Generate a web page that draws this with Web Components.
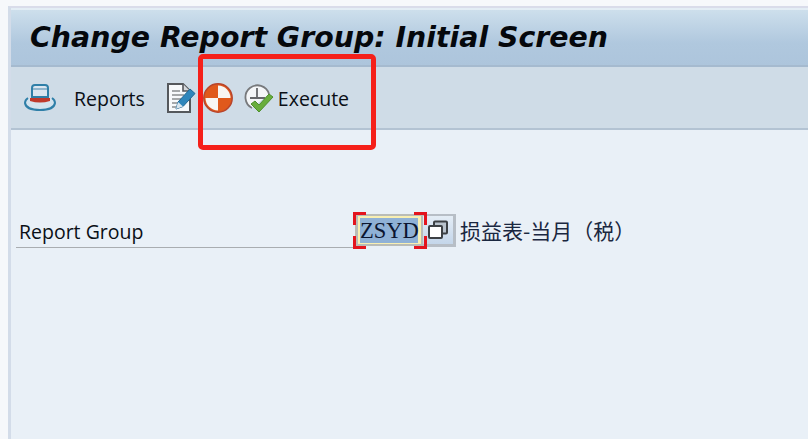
<!DOCTYPE html>
<html lang="en"><head><meta charset="utf-8"><title>Change Report Group</title>
<style>html,body{margin:0;height:100%;overflow:hidden;background:#f5f7fa}</style></head>
<body>
<sap-window>
  <sap-title slot="title">Change Report Group: Initial Screen</sap-title>
  <sap-toolbar slot="toolbar">
    <sap-tool icon="hat" style="--gap:17px">Reports</sap-tool>
    <sap-tool icon="edit" style="--ml:21px"></sap-tool>
    <sap-tool icon="target" style="--ml:7px"></sap-tool>
    <sap-tool icon="run" style="--ml:10px;--gap:4px">Execute</sap-tool>
  </sap-toolbar>
  <sap-field label="Report Group" value="ZSYD" desc="损益表-当月（税）"></sap-field>
</sap-window>
<callout-box></callout-box>
<script>
class SapWindow extends HTMLElement {
  constructor() {
    super();
    this.attachShadow({ mode: 'open' }).innerHTML = `<style>
:host{display:flex;flex-direction:column;height:439px;box-sizing:border-box;padding:6px 0 0 8px;background:#f6f8fb;font-family:"Open Sans","Noto Sans",sans-serif;color:#0a0f16}
.frame{flex:1;display:flex;flex-direction:column;border-top:2px solid #d9dcea;border-left:3px solid #d3dce9;background:#e9f0f7;min-height:0}
</style><div class="frame"><slot name="title"></slot><slot name="toolbar"></slot><slot></slot></div>`;
  }
}
class SapTitle extends HTMLElement {
  constructor() {
    super();
    this.attachShadow({ mode: 'open' }).innerHTML = `<style>
:host{display:flex;align-items:center;box-sizing:border-box;height:59px;padding:0 0 0 19px;border-top:2px solid #e3edf5;border-bottom:2px solid #a5bacf;background:linear-gradient(#cddfec,#b0c8de 60%,#adc5dc);font:italic 700 28.4px "DejaVu Sans",sans-serif;color:#05080c;white-space:nowrap}
</style><slot></slot>`;
  }
}
class SapToolbar extends HTMLElement {
  constructor() {
    super();
    this.attachShadow({ mode: 'open' }).innerHTML = `<style>
:host{display:flex;align-items:center;box-sizing:border-box;height:63px;padding:0 0 0 12px;background:#cfdce7;border-bottom:2px solid #b3c3d3}
</style><slot></slot>`;
  }
}
const ICONS = {
  hat: `<svg width="34" height="30" viewBox="0 0 34 30"><path d="M9 5q0-3 3-3h10q3 0 3 3v9H9z" fill="#dbe6f0" stroke="#2f7fa8" stroke-width="2"/><path d="M10 6h14" stroke="#8fb5cd" stroke-width="2"/><path d="M5 15q-3 2-3 5 1 7 15 7t15-7q0-3-3-5" fill="#d4e3ee" stroke="#2f7fa8" stroke-width="2"/><path d="M7 15h20v3q-10 3-20 0z" fill="#c0392b"/></svg>`,
  edit: `<svg width="30" height="32" viewBox="0 0 30 32"><path d="M2 2h15l7 7v21H2z" fill="#f7f9fb" stroke="#55585c" stroke-width="2"/><path d="M17 2v7h7" fill="#d5d8dc" stroke="#55585c" stroke-width="1.6"/><path d="M6 9h8M6 13h12M6 17h9M6 21h6M6 25h4" stroke="#8a8d90" stroke-width="1.5"/><path d="M10 27l2-7L24 7l5 4.5L17 24.5z" fill="#2f86bb" stroke="#1f6692"/><path d="M10 27l2-7 5 4.5z" fill="#d9e5ee"/></svg>`,
  target: `<svg width="30" height="32" viewBox="0 0 30 32"><circle cx="15" cy="16" r="14.2" fill="#e0591c" stroke="#b8452c" stroke-width="1.5"/><path d="M15 3.5a12.5 12.5 0 0 1 12.5 12.5H15zM15 16v12.5A12.5 12.5 0 0 1 2.5 16z" fill="#f8f6f3"/></svg>`,
  run: `<svg width="31" height="32" viewBox="0 0 31 32"><path d="M9 26A12 12 0 1 1 26 12" fill="#f4f6f8" stroke="#77797c" stroke-width="1.8"/><path d="M14 6v11M7 16h15" stroke="#66686b" stroke-width="1.8"/><path d="M8 22l4-3 4 4 10-11 4 3-14 15z" fill="#68ad3c" stroke="#4c8f2b"/></svg>`
};
class SapTool extends HTMLElement {
  constructor() {
    super();
    this.attachShadow({ mode: 'open' });
  }
  connectedCallback() {
    this.shadowRoot.innerHTML = `<style>
:host{display:flex;align-items:center;gap:var(--gap,0);margin-left:var(--ml,0);font-size:19.5px;line-height:30px;padding-top:1px;white-space:nowrap;color:#0a0f16}
svg{display:block;flex:none;margin-top:-1px}
slot{display:block;padding-top:1px}
</style>${ICONS[this.getAttribute('icon')]}<slot></slot>`;
  }
}
class SapField extends HTMLElement {
  constructor() {
    super();
    this.attachShadow({ mode: 'open' });
  }
  connectedCallback() {
    const a = n => this.getAttribute(n);
    this.shadowRoot.innerHTML = `<style>
:host{display:flex;align-items:flex-start;margin:83px 0 0 5px}
.label{box-sizing:border-box;width:339px;height:35px;padding:5px 0 0 3px;border-bottom:1px solid #a9adb1;font-size:19.5px;line-height:28px;color:#0a0f16}
.input{position:relative;box-sizing:border-box;width:68px;height:32px;border:2px solid #b9bcb7;border-left-width:3px;background:#f8efb2;padding:2px 3px 0 2px;margin-top:1px}
.sel{display:block;height:25px;background:#8fb1d6;font:22.5px/26px "Liberation Serif",serif;color:#0b1530;text-align:center}
.c{position:absolute;width:10px;height:10px;border:solid #e3141d;border-width:0}
.tl{left:-5px;top:-4px;border-top-width:3px;border-left-width:3px}
.tr{right:-6px;top:-4px;border-top-width:3px;border-right-width:3px}
.bl{left:-5px;bottom:-5px;border-bottom-width:3px;border-left-width:3px}
.br{right:-6px;bottom:-5px;border-bottom-width:3px;border-right-width:3px}
.help{box-sizing:border-box;width:33px;height:33px;display:flex;align-items:center;justify-content:center;border:solid #b7bec6;border-width:2px 3px 3px 0;background:linear-gradient(#e4edf6,#c4d6ea);margin-top:1px}
.desc{margin:2px 0 0 4px;font:21px/31px "Noto Sans CJK SC",sans-serif;color:#1a2740;white-space:nowrap}
</style>
<div class="label">${a('label')}</div>
<div class="input"><span class="sel">${a('value')}</span><i class="c tl"></i><i class="c tr"></i><i class="c bl"></i><i class="c br"></i></div>
<div class="help"><svg width="22" height="20" viewBox="0 0 22 20"><rect x="7" y="1.5" width="13" height="12" rx="1" fill="#b9c3cd" stroke="#3c4044" stroke-width="2"/><rect x="2" y="6" width="13" height="12" rx="1" fill="#fff" stroke="#3c4044" stroke-width="2"/></svg></div>
<div class="desc">${a('desc')}</div>`;
  }
}
class CalloutBox extends HTMLElement {
  constructor() {
    super();
    this.attachShadow({ mode: 'open' }).innerHTML = `<style>
:host{position:absolute;left:198px;top:54px;width:178px;height:96px;box-sizing:border-box;border:5px solid #f5201a;border-radius:5px;pointer-events:none}
</style>`;
  }
}
customElements.define('sap-window', SapWindow);
customElements.define('sap-title', SapTitle);
customElements.define('sap-toolbar', SapToolbar);
customElements.define('sap-tool', SapTool);
customElements.define('sap-field', SapField);
customElements.define('callout-box', CalloutBox);
</script>
</body></html>
